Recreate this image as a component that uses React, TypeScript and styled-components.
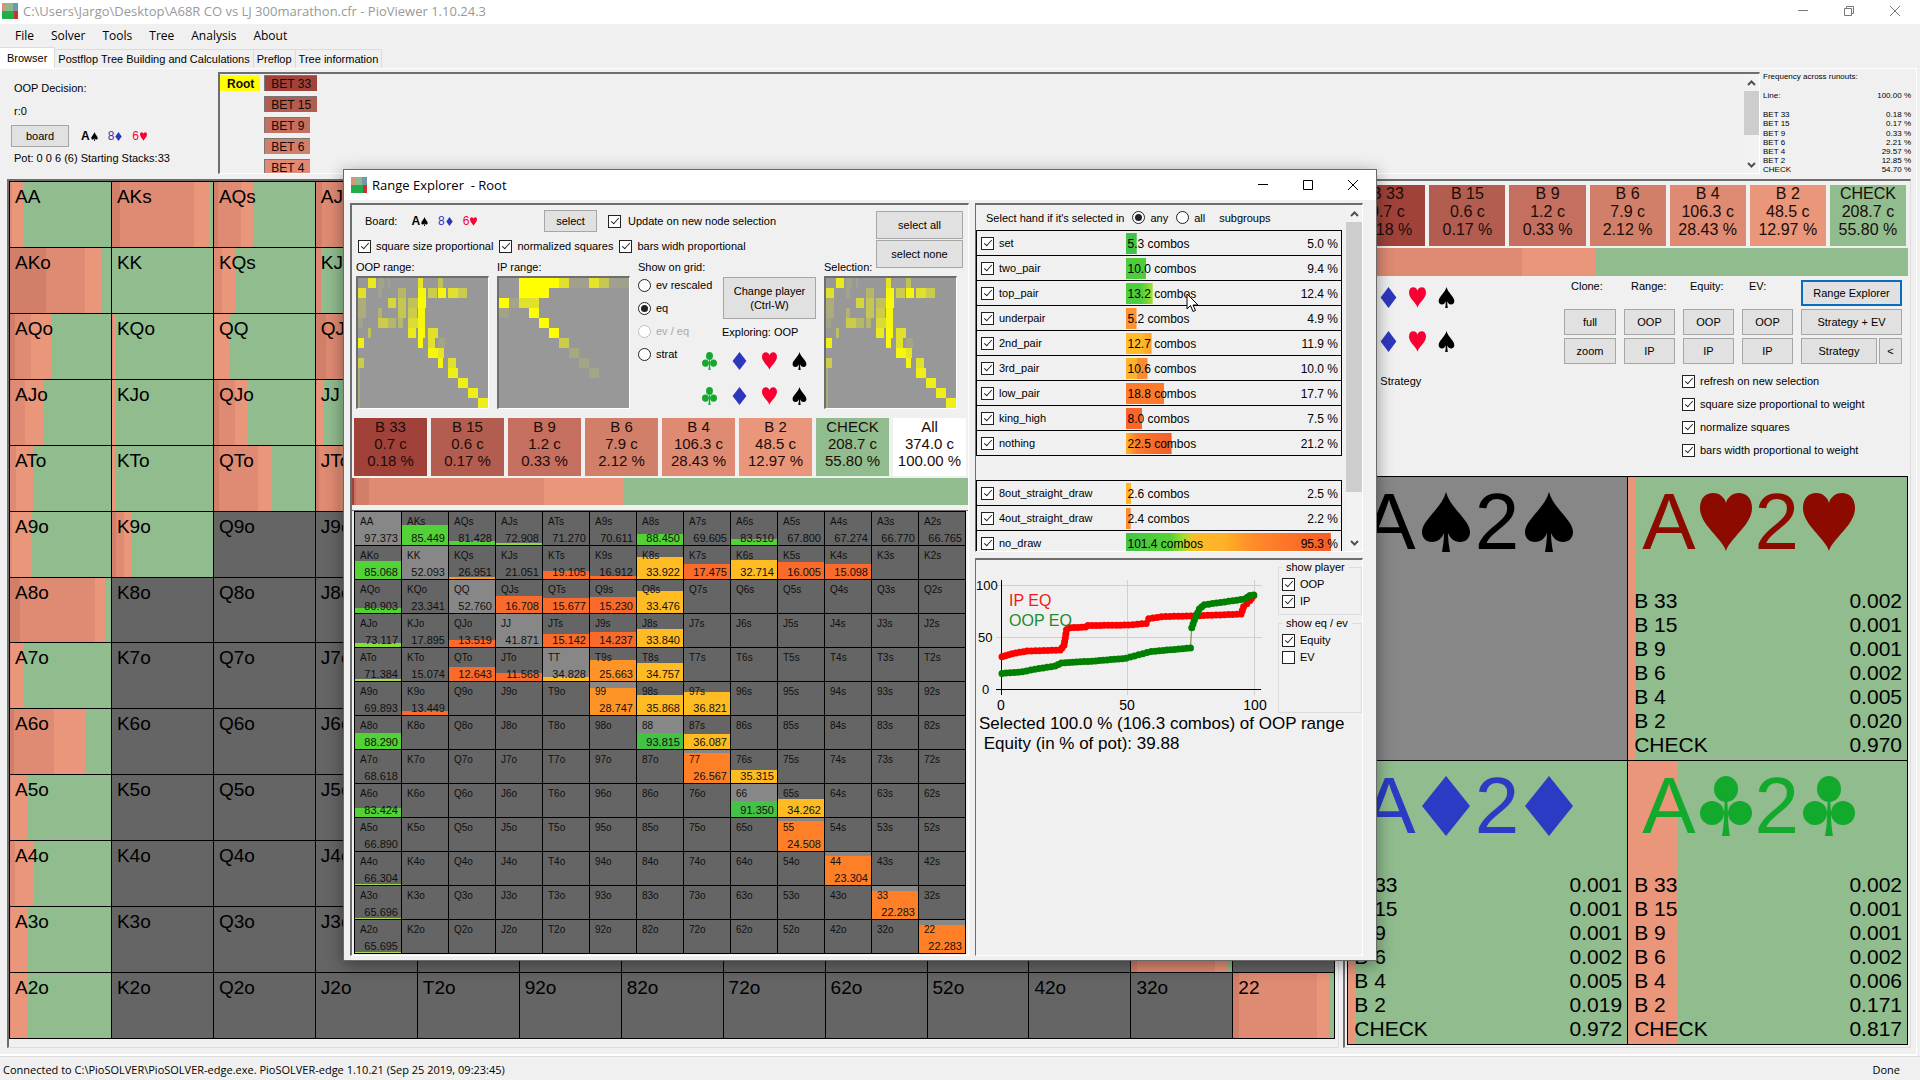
import React from "react";
import styled, { createGlobalStyle, css } from "styled-components";

const UI = `"Liberation Sans", Arial, sans-serif`;
const SHELL = `"Open Sans", "Noto Sans", sans-serif`;

const C = {
  face: "#f0f0f0",
  edge: "#6e6e6e",
  light: "#dcdcdc",
  b33: "#a0423a",
  b15: "#b25d50",
  b9: "#c46f5f",
  b6: "#d27f6a",
  b4: "#df8a72",
  b2: "#e9967a",
  check: "#90bc8e",
  empty: "#656565",
  pair: "#878787",
  red: "#fa0032",
  blue: "#2d37be",
  green: "#12a92c",
};

const GlobalStyle = createGlobalStyle`
  *, *::before, *::after { box-sizing: border-box; }
  body { margin: 0; background: ${C.face}; color: #000; font: 11px/14px ${UI}; }
  button, input { font: inherit; color: inherit; margin: 0; }
  button { padding: 0; }
  table { border-collapse: collapse; border-spacing: 0; }
  td, th { padding: 0; font-weight: normal; text-align: left; }
`;

/* ---------- shared controls ---------- */

const Button = styled.button<{ $h?: number; $focus?: boolean }>`
  height: ${(p) => p.$h ?? 26}px;
  background: #e1e1e1;
  border: ${(p) => (p.$focus ? "2px solid #0a6cbd" : "1px solid #a6a6a6")};
  border-radius: 0;
  text-align: center;
`;

const Label = styled.label<{ $dim?: boolean; $gap?: number }>`
  display: flex;
  align-items: center;
  gap: ${(p) => p.$gap ?? 5}px;
  white-space: nowrap;
  color: ${(p) => (p.$dim ? "#a8a8a8" : "#000")};
`;

const Tick = styled.input.attrs({ type: "checkbox" })`
  appearance: none;
  flex: none;
  display: grid;
  place-items: center;
  width: 13px;
  height: 13px;
  background: #fff;
  border: 1px solid #222;
  &:checked::after {
    content: "";
    width: 4px;
    height: 8px;
    margin-bottom: 2px;
    border: solid #222;
    border-width: 0 1px 1px 0;
    transform: rotate(42deg);
  }
`;

const Dot = styled.input.attrs({ type: "radio" })`
  appearance: none;
  flex: none;
  display: grid;
  place-items: center;
  width: 13px;
  height: 13px;
  background: #fff;
  border: 1px solid #222;
  border-radius: 50%;
  &:checked::after {
    content: "";
    width: 7px;
    height: 7px;
    border-radius: 50%;
    background: #222;
  }
  &:disabled { border-color: #c0c0c0; }
`;

function Check({ text, off, gap }: { text: string; off?: boolean; gap?: number }) {
  return (
    <Label $gap={gap}>
      <Tick defaultChecked={!off} />
      {text}
    </Label>
  );
}

type SuitName = "c" | "d" | "h" | "s";

function Suit({ s, w, h, color }: { s: SuitName; w: number; h: number; color?: string }) {
  const fill = color ?? { c: C.green, d: C.blue, h: C.red, s: "#000" }[s];
  return (
    <svg width={w} height={h} viewBox="0 0 52 60" fill={fill} preserveAspectRatio="none" aria-hidden="true">
      {s === "h" && (
        <path d="M26 59C22 46 0 33 0 16C0 6 6 1 13 1C20 1 25 6 26 11C27 6 32 1 39 1C46 1 52 6 52 16C52 33 30 46 26 59Z" />
      )}
      {s === "d" && <path d="M26 0L50 30L26 60L2 30Z" />}
      {s === "s" && (
        <path d="M26 0C30 16 50 28 50 40C50 46 46 50 40 50C34 50 30 46 28 41C28 48 29 54 30 60H22C23 54 24 48 24 41C22 46 18 50 12 50C6 50 2 46 2 40C2 28 22 16 26 0Z" />
      )}
      {s === "c" && (
        <>
          <ellipse cx="26" cy="13" rx="12" ry="13" />
          <circle cx="12" cy="37" r="12" />
          <circle cx="40" cy="37" r="12" />
          <path d="M25 20H27L28 38C28 48 29 54 30 60H22C23 54 24 48 24 38Z" />
        </>
      )}
    </svg>
  );
}

const Cards = styled.span`
  display: flex;
  align-items: center;
  gap: 10px;
  font-size: 12px;
`;
const Card = styled.b<{ $c: string; $plain?: boolean }>`
  display: flex;
  align-items: center;
  gap: 1px;
  color: ${(p) => p.$c};
  font-weight: ${(p) => (p.$plain ? 400 : 700)};
`;

function Board() {
  return (
    <Cards>
      <Card $c="#000">A<Suit s="s" w={7} h={9} /></Card>
      <Card $c={C.blue} $plain>8<Suit s="d" w={7} h={9} /></Card>
      <Card $c={C.red} $plain>6<Suit s="h" w={7} h={9} /></Card>
    </Cards>
  );
}

function AppIcon() {
  return (
    <svg width="16" height="16" viewBox="0 0 16 16" aria-hidden="true">
      <path fill="#d8937c" d="M0 0h4v9H0z" />
      <path fill="#8fb98a" d="M4 0h7v9H4z" />
      <path fill="#6f98a8" d="M11 0h5v9h-5z" />
      <path fill="#1fae4b" d="M0 8h12v8H0z" />
      <path fill="#c8322f" d="M12 8h4v8h-4z" />
    </svg>
  );
}

const WinButtons = styled.div<{ $gap: number; $c: string }>`
  display: flex;
  align-items: center;
  gap: ${(p) => p.$gap}px;
  margin-left: auto;
  color: ${(p) => p.$c};
`;
const WinButton = styled.button`
  display: grid;
  place-items: center;
  width: 12px;
  height: 12px;
  border: 0;
  background: none;
`;

function WindowControls({ gap, color, restore }: { gap: number; color: string; restore?: boolean }) {
  const g = { width: 12, height: 12, viewBox: "0 0 12 12", fill: "none", stroke: "currentColor" };
  return (
    <WinButtons $gap={gap} $c={color}>
      <WinButton aria-label="Minimize"><svg {...g}><path d="M1 5.5h10" /></svg></WinButton>
      <WinButton aria-label="Maximize">
        <svg {...g}>{restore ? <path d="M1.5 3.5h7v7h-7zM3.5 3V1.5h7v7H9" /> : <path d="M1.500 1.500h9v9h-9z" />}</svg>
      </WinButton>
      <WinButton aria-label="Close"><svg {...g}><path d="M1 1l10 10M11 1L1 11" /></svg></WinButton>
    </WinButtons>
  );
}

const Rail = styled.div<{ $w: number }>`
  flex: none;
  display: flex;
  flex-direction: column;
  align-items: center;
  width: ${(p) => p.$w}px;
  background: #f2f2f2;
  color: #505050;
`;
const RailEnd = styled.span`
  display: grid;
  place-items: center;
  height: 17px;
`;
const Thumb = styled.span<{ $size: number }>`
  align-self: stretch;
  flex: 0 0 ${(p) => p.$size}%;
  margin-bottom: auto;
  background: #cdcdcd;
`;

function Scrollbar({ width, size }: { width: number; size: number }) {
  const g = { width: 9, height: 6, viewBox: "0 0 9 6", fill: "none", stroke: "currentColor", strokeWidth: 2 };
  return (
    <Rail $w={width}>
      <RailEnd><svg {...g}><path d="M1 5l3.500-3.500L8 5" /></svg></RailEnd>
      <Thumb $size={size} />
      <RailEnd><svg {...g}><path d="M1 1l3.500 3.500L8 1" /></svg></RailEnd>
    </Rail>
  );
}

const sunken = css`
  border: solid;
  border-width: 2px 1px 1px 2px;
  border-color: ${C.edge} #fff #fff ${C.edge};
`;

/* ---------- action summary ---------- */

const ACTIONS: [string, string, string, string][] = [
  ["B 33", "0.7 c", "0.18 %", C.b33],
  ["B 15", "0.6 c", "0.17 %", C.b15],
  ["B 9", "1.2 c", "0.33 %", C.b9],
  ["B 6", "7.9 c", "2.12 %", C.b6],
  ["B 4", "106.3 c", "28.43 %", C.b4],
  ["B 2", "48.5 c", "12.97 %", C.b2],
  ["CHECK", "208.7 c", "55.80 %", C.check],
];

const ActionRow = styled.div<{ $big?: boolean }>`
  display: flex;
  gap: 4px;
  padding: 0 2px;
  font-size: ${(p) => (p.$big ? 16 : 15)}px;
  line-height: ${(p) => (p.$big ? 18 : 17)}px;
`;
const Action = styled.button<{ $bg: string; $h: number }>`
  flex: 1 1 0;
  display: flex;
  flex-direction: column;
  align-items: center;
  height: ${(p) => p.$h}px;
  border: 0;
  background: ${(p) => p.$bg};
  color: #1c0c08;
  white-space: nowrap;
`;
const MixBar = styled.div<{ $h: number }>`
  flex: none;
  height: ${(p) => p.$h}px;
  margin-top: 2px;
`;

const steps = (parts: [string, number][]) => {
  let at = 0;
  return `linear-gradient(90deg, ${parts
    .map(([c, end]) => {
      const s = `${c} ${at}% ${end}%`;
      at = end;
      return s;
    })
    .join(", ")})`;
};

const MIX = steps([[C.b33, 0.3], [C.b9, 0.7], [C.b6, 2.8], [C.b4, 31.2], [C.b2, 44.2], [C.check, 100]]);

function Actions({ big, all }: { big?: boolean; all?: boolean }) {
  const list = all ? [...ACTIONS, ["All", "374.0 c", "100.00 %", "#fff"] as [string, string, string, string]] : ACTIONS;
  return (
    <>
      <ActionRow $big={big}>
        {list.map(([n, c, p, bg]) => (
          <Action key={n} $bg={bg} $h={big ? 61 : 58}>
            <span>{n}</span>
            <span>{c}</span>
            <span>{p}</span>
          </Action>
        ))}
      </ActionRow>
      <MixBar $h={big ? 28 : 27} style={{ background: MIX }} />
    </>
  );
}

/* ---------- hand matrices ---------- */

const RANKS = "AKQJT98765432".split("");
const handName = (r: number, c: number) =>
  r === c ? RANKS[r] + RANKS[c] : r < c ? `${RANKS[r]}${RANKS[c]}s` : `${RANKS[c]}${RANKS[r]}o`;
const HANDS = RANKS.flatMap((_, r) => RANKS.map((__, c) => ({ r, c, name: handName(r, c) })));

/* percent of the cell where "bet 6", "bet 4" and "bet 2" end; the rest is check */
const STRATEGY: Record<string, [number, number, number]> = {
  AA: [0, 2, 14], AKs: [8, 81, 97], AQs: [4, 27, 39], AJs: [6, 60, 72], ATs: [0, 20, 40],
  AKo: [36, 74, 91], KK: [0, 0, 0], KQs: [0, 8, 21], KJs: [0, 5, 5],
  AQo: [5, 21, 41], KQo: [0, 1, 4], QQ: [0, 1, 16], QJs: [10, 80, 92],
  AJo: [1, 15, 34], KJo: [0, 0, 3], QJo: [5, 21, 34], JJ: [0, 1, 7],
  ATo: [0, 6, 23], KTo: [0, 0, 3], QTo: [5, 44, 56], JTo: [3, 24, 35],
  A9o: [0, 2, 21], K9o: [4, 12, 19], A8o: [10, 84, 94], A7o: [0, 1, 14], A6o: [4, 44, 75],
  A5o: [0, 1, 18], A4o: [0, 5, 24], A3o: [0, 1, 18], A2o: [0, 1, 18],
  "33": [6, 83, 95], "22": [6, 83, 95],
};

const Matrix = styled.div<{ $size: number }>`
  flex: 1;
  display: grid;
  grid-template-columns: repeat(13, minmax(0, 1fr));
  grid-template-rows: repeat(13, minmax(0, 1fr));
  min-height: 0;
  border: solid #000;
  border-width: 1px 0 0 1px;
  font-size: ${(p) => p.$size}px;
`;
const StrategyCell = styled.div`
  padding: 4px 5px;
  border: solid #000;
  border-width: 0 1px 1px 0;
  line-height: 22px;
`;

function StrategyMatrix() {
  return (
    <Matrix $size={19}>
      {HANDS.map(({ name }) => {
        const m = STRATEGY[name];
        const background = m ? steps([[C.b6, m[0]], [C.b4, m[1]], [C.b2, m[2]], [C.check, 100]]) : C.empty;
        return <StrategyCell key={name} style={{ background }}>{name}</StrategyCell>;
      })}
    </Matrix>
  );
}

const G = "#52d236", Y = "#a9d84c", A = "#ffbb22", O = "#ff9426", P = "#ff7f27", R = "#fa6a2a", D = "#43c345";
/* equity text, filled height as percent of the cell, fill colour */
const EQUITY: Record<string, [string, number, string]> = {
  AA: ["97.373", 0, G], AKs: ["85.449", 60, G], AQs: ["81.428", 12, G], AJs: ["72.908", 6, "#86dc3c"],
  ATs: ["71.270", 0, G], A9s: ["70.611", 0, G], A8s: ["88.450", 33, G], A7s: ["69.605", 0, G],
  A6s: ["83.510", 18, G], A5s: ["67.800", 0, G], A4s: ["67.274", 0, G], A3s: ["66.770", 0, G], A2s: ["66.765", 0, G],
  AKo: ["85.068", 54, G], KK: ["52.093", 0, G], KQs: ["26.951", 6, O], KJs: ["21.051", 0, G], KTs: ["19.105", 24, R],
  K9s: ["16.912", 9, R], K8s: ["33.922", 68, A], K7s: ["17.475", 45, R], K6s: ["32.714", 58, A], K5s: ["16.005", 52, R], K4s: ["15.098", 45, R],
  AQo: ["80.903", 15, G], KQo: ["23.341", 0, G], QQ: ["52.760", 0, G], QJs: ["16.708", 51, R], QTs: ["15.677", 45, R], Q9s: ["15.230", 48, R], Q8s: ["33.476", 68, A],
  AJo: ["73.117", 11, "#86dc3c"], KJo: ["17.895", 0, G], QJo: ["13.519", 21, R], JJ: ["41.871", 0, G], JTs: ["15.142", 38, R], J9s: ["14.237", 45, R], J8s: ["33.840", 54, A],
  ATo: ["71.384", 6, Y], KTo: ["15.074", 0, G], QTo: ["12.643", 42, R], JTo: ["11.568", 24, R], TT: ["34.828", 12, A], T9s: ["25.663", 64, O], T8s: ["34.757", 54, A],
  A9o: ["69.893", 0, G], K9o: ["13.449", 12, R], "99": ["28.747", 82, O], "98s": ["35.868", 60, A], "97s": ["36.821", 71, A],
  A8o: ["88.290", 48, G], "88": ["93.815", 48, D], "87s": ["36.087", 45, A],
  A7o: ["68.618", 0, G], "77": ["26.567", 90, P], "76s": ["35.315", 38, A],
  A6o: ["83.424", 27, G], "66": ["91.350", 49, D], "65s": ["34.262", 56, A],
  A5o: ["66.890", 0, G], "55": ["24.508", 90, P], A4o: ["66.304", 3, Y], "44": ["23.304", 88, P],
  A3o: ["65.696", 3, Y], "33": ["22.283", 86, P], A2o: ["65.695", 3, Y], "22": ["22.283", 86, P],
};

const EquityCell = styled.div`
  display: flex;
  flex-direction: column;
  justify-content: space-between;
  padding: 3px 3px 0 5px;
  border: solid #000;
  border-width: 0 1px 1px 0;
  color: #101010;
  line-height: 13px;
`;
const EquityValue = styled.span`
  align-self: flex-end;
  font-size: 11px;
`;

function EquityMatrix() {
  return (
    <Matrix $size={10}>
      {HANDS.map(({ name, r, c }) => {
        const e = EQUITY[name];
        const base = r === c ? C.pair : C.empty;
        const background = e ? `linear-gradient(0deg, ${e[2]} 0 ${e[1]}%, ${base} ${e[1]}% 100%)` : base;
        return (
          <EquityCell key={name} style={{ background }}>
            <span>{name}</span>
            {e && <EquityValue>{e[0]}</EquityValue>}
          </EquityCell>
        );
      })}
    </Matrix>
  );
}

/* row, column, width share, weight */
type Blot = [number, number, number, number];
const OOP: Blot[] = [
  [0, 1, 0.8, 0.8], [0, 2, 0.6, 0.1], [0, 3, 0.2, 0.1], [0, 6, 0.5, 0.75], [0, 8, 0.5, 0.4],
  [1, 0, 0.8, 0.7], [1, 2, 0.4, 0.1], [1, 4, 0.8, 0.3], [1, 6, 0.8, 0.9], [1, 7, 0.9, 0.5], [1, 8, 0.8, 0.9], [1, 9, 1, 0.7], [1, 10, 0.9, 0.5],
  [2, 0, 0.8, 0.2], [2, 3, 0.8, 0.6], [2, 4, 0.8, 0.45], [2, 5, 1, 0.4], [2, 6, 0.8, 0.95],
  [3, 0, 0.8, 0.2], [3, 2, 0.4, 0.25], [3, 4, 0.8, 0.45], [3, 5, 0.9, 0.5], [3, 6, 0.7, 0.9],
  [4, 0, 0.5, 0.1], [4, 2, 1, 0.5], [4, 3, 0.8, 0.3], [4, 4, 0.5, 0.3], [4, 5, 1, 0.65], [4, 6, 0.7, 0.9],
  [5, 1, 0.3, 0.4], [5, 5, 0.8, 0.8], [5, 6, 0.7, 0.95], [5, 7, 1, 0.7],
  [6, 0, 0.6, 0.85], [6, 6, 0.5, 0.95], [6, 7, 0.7, 0.7], [6, 8, 0.7, 0.12],
  [7, 7, 1, 0.92], [7, 8, 0.6, 0.75], [8, 0, 0.6, 0.5], [8, 8, 0.5, 0.9], [8, 9, 0.8, 0.7],
  [9, 0, 0.2, 0.2], [9, 9, 1, 0.85], [10, 0, 0.2, 0.2], [10, 10, 1, 0.85], [11, 0, 0.2, 0.2], [11, 11, 1, 0.85], [12, 0, 0.2, 0.2], [12, 12, 1, 0.85],
];
const IP: Blot[] = [
  [0, 2, 1, 1], [0, 3, 1, 1], [0, 4, 1, 1], [0, 5, 1, 1], [0, 6, 1, 0.7], [0, 7, 1, 0.08], [0, 8, 1, 0.08], [0, 9, 1, 0.75], [0, 10, 1, 0.45], [0, 11, 1, 0.08], [0, 12, 1, 0.08],
  [1, 2, 1, 1], [1, 3, 1, 1], [1, 4, 1, 1], [2, 0, 1, 1], [2, 1, 1, 0.12], [2, 2, 1, 0.7], [2, 3, 1, 0.7], [3, 0, 1, 0.1], [3, 3, 1, 1],
  [4, 4, 1, 1], [5, 5, 1, 1], [6, 6, 1, 0.5], [7, 7, 1, 0.15], [8, 8, 1, 0.12], [9, 9, 1, 0.12],
];

const MiniBox = styled.div<{ $col: number }>`
  ${sunken}
  grid-area: 4 / ${(p) => p.$col};
  display: grid;
  grid-template: repeat(13, minmax(0, 1fr)) / repeat(13, minmax(0, 1fr));
  width: 133px;
  height: 133px;
  background: #989898;
`;

function MiniRange({ blots, col }: { blots: Blot[]; col: number }) {
  return (
    <MiniBox $col={col}>
      {HANDS.map(({ r, c, name }) => {
        const b = blots.find((x) => x[0] === r && x[1] === c);
        const ink = b ? `rgba(255, 255, 0, ${b[3]})` : "";
        return (
          <span
            key={name}
            style={b && { background: `linear-gradient(90deg, ${ink} ${b[2] * 100}%, transparent ${b[2] * 100}%)` }}
          />
        );
      })}
    </MiniBox>
  );
}

/* ---------- main window ---------- */

const Shell = styled.div`
  position: relative;
  display: flex;
  flex-direction: column;
  min-height: 100vh;
  overflow: hidden;
  background: ${C.face};
`;
const TitleBar = styled.header`
  display: flex;
  align-items: center;
  gap: 5px;
  height: 24px;
  padding: 0 19px 2px 2px;
  background: #fff;
  color: #999;
  font: 13px/18px ${SHELL};
`;
const MenuBar = styled.nav`
  display: flex;
  gap: 17px;
  height: 23px;
  padding-left: 15px;
  font: 12px/18px ${SHELL};
`;
const MenuItem = styled.button`
  border: 0;
  background: none;
`;
const Tabs = styled.div`
  display: flex;
  align-items: flex-end;
  height: 21px;
`;
const Tab = styled.button<{ $on?: boolean }>`
  height: ${(p) => (p.$on ? 21 : 19)}px;
  padding: 0 ${(p) => (p.$on ? 7 : 3)}px;
  border: solid ${C.light};
  border-width: 1px 1px 0 0;
  background: ${(p) => (p.$on ? "#fff" : "#f0f0f0")};
`;
const Page = styled.main`
  flex: 1;
  display: flex;
  flex-direction: column;
  gap: 5px;
  margin-right: 3px;
  padding: 3px 5px 6px 7px;
  border: solid #fff;
  border-width: 1px 1px 2px 0;
`;
const TopStrip = styled.section`
  display: grid;
  grid-template-columns: 208px minmax(0, 1fr) 148px;
  column-gap: 3px;
  height: 102px;
`;
const Info = styled.div`
  display: flex;
  flex-direction: column;
  padding: 8px 0 0 7px;
`;
const InfoLine = styled.div<{ $h?: number }>`
  display: flex;
  align-items: center;
  gap: 12px;
  height: ${(p) => p.$h ?? 22}px;
`;
const BoardButton = styled(Button)`
  width: 58px;
  margin-left: -3px;
`;
const TreeBox = styled.div`
  ${sunken}
  display: flex;
  overflow: hidden;
`;
const TreeBody = styled.div`
  flex: 1;
  display: flex;
  gap: 4px;
  padding-top: 1px;
  font-size: 12px;
`;
const TreeColumn = styled.div`
  display: flex;
  flex-direction: column;
  align-items: flex-start;
  gap: 5px;
`;
const Node = styled.button<{ $bg: string; $root?: boolean }>`
  flex: none;
  height: 16px;
  padding: 0 6px;
  border: solid ${(p) => (p.$root ? p.$bg : "#777")};
  border-width: 1px 0 0 1px;
  background: ${(p) => p.$bg};
  color: #140806;
  font-weight: ${(p) => (p.$root ? 700 : 400)};
  line-height: 14px;
`;
const Runouts = styled.table`
  width: 100%;
  font-size: 8px;
  line-height: 9px;
  td:last-child { text-align: right; }
  td, th { height: 9px; }
`;
const GapRow = styled.tr`
  td { height: 10px; }
`;

const Split = styled.section`
  flex: 1;
  display: grid;
  grid-template-columns: minmax(0, 1333fr) minmax(0, 568fr);
  column-gap: 4px;
`;
const LeftPane = styled.div`
  ${sunken}
  display: flex;
  border-color: ${C.edge} ${C.light} ${C.light} ${C.edge};
  padding: 0 3px 8px 0;
`;
const RightPane = styled.div`
  ${sunken}
  display: flex;
  flex-direction: column;
  border-color: ${C.edge} ${C.light} ${C.light} ${C.edge};
  padding: 4px 2px 2px 2px;
`;
const Controls = styled.div`
  display: flex;
  justify-content: space-between;
  height: 200px;
  padding: 4px 6px 0 4px;
`;
const SuitFilter = styled.div`
  display: grid;
  grid-template-columns: repeat(4, 18px);
  gap: 23px 11px;
  align-content: start;
  padding-top: 7px;
`;
const FilterCaption = styled.span`
  grid-column: 2 / 5;
  line-height: 12px;
`;
const ButtonSide = styled.div`
  display: flex;
  flex-direction: column;
  gap: 8px;
`;
const ButtonGrid = styled.div`
  display: grid;
  grid-template-columns: 52px 51px 51px 51px 101px;
  gap: 3px 8px;
`;
const Caption = styled.span`
  padding-left: 7px;
  line-height: 12px;
`;
const Pair = styled.div`
  display: grid;
  grid-template-columns: 1fr 23px;
  gap: 2px;
`;
const Options = styled.div`
  display: flex;
  flex-direction: column;
  gap: 9px;
  padding: 2px 0 0 118px;
`;
const RunoutGrid = styled.div`
  flex: 1;
  display: grid;
  grid-template: repeat(2, minmax(0, 1fr)) / repeat(2, minmax(0, 1fr));
  border: solid #000;
  border-width: 1px 0 0 1px;
`;
const RunoutCell = styled.div`
  display: flex;
  flex-direction: column;
  justify-content: space-between;
  padding: 9px 5px 3px 6px;
  border: solid #000;
  border-width: 0 1px 1px 0;
`;
const Combo = styled.div<{ $c: string }>`
  display: flex;
  align-items: center;
  padding-left: 8px;
  color: ${(p) => p.$c};
  font-size: 80px;
  line-height: 72px;
`;
const ComboSuit = styled.span`
  display: flex;
  padding: 0 3px 0 4px;
`;
const Stats = styled.table`
  width: 100%;
  font-size: 21px;
  line-height: 24px;
  td { text-align: right; }
`;

const FREQ: [string, string][] = [
  ["BET 33", "0.18 %"], ["BET 15", "0.17 %"], ["BET 9", "0.33 %"], ["BET 6", "2.21 %"],
  ["BET 4", "29.57 %"], ["BET 2", "12.85 %"], ["CHECK", "54.70 %"],
];

const COMBOS: { s: SuitName; color: string; bet: number; v?: string[] }[] = [
  { s: "s", color: "#000", bet: 0 },
  { s: "h", color: "#8c0a00", bet: 2.7, v: ["0.002", "0.001", "0.001", "0.002", "0.005", "0.020", "0.970"] },
  { s: "d", color: "#2b3bc4", bet: 2.7, v: ["0.001", "0.001", "0.001", "0.002", "0.005", "0.019", "0.972"] },
  { s: "c", color: C.green, bet: 18, v: ["0.002", "0.001", "0.001", "0.002", "0.006", "0.171", "0.817"] },
];

const SUITS: SuitName[] = ["c", "d", "h", "s"];

function RunoutCells() {
  return (
    <RunoutGrid>
      {COMBOS.map(({ s, color, bet, v }) => (
        <RunoutCell key={s} style={{ background: v ? steps([[C.b2, bet], [C.check, 100]]) : C.pair }}>
          <Combo $c={color}>
            A<ComboSuit><Suit s={s} w={52} h={60} color={color} /></ComboSuit>
            2<ComboSuit><Suit s={s} w={52} h={60} color={color} /></ComboSuit>
          </Combo>
          {v && (
            <Stats>
              <tbody>
                {v.map((x, i) => (
                  <tr key={i}>
                    <th scope="row">{ACTIONS[i][0]}</th>
                    <td>{x}</td>
                  </tr>
                ))}
              </tbody>
            </Stats>
          )}
        </RunoutCell>
      ))}
    </RunoutGrid>
  );
}

const StatusBar = styled.footer`
  display: flex;
  justify-content: space-between;
  height: 24px;
  padding: 4px 20px 0 3px;
  border-top: 1px solid ${C.light};
  font: 11px/18px ${SHELL};
`;

/* ---------- range explorer ---------- */

const Dialog = styled.section`
  position: absolute;
  left: 343px;
  top: 169px;
  display: flex;
  flex-direction: column;
  width: 1034px;
  height: 792px;
  border: 1px solid #6a6a6a;
  background: ${C.face};
  box-shadow: 0 4px 16px rgba(0, 0, 0, 0.4);
`;
const DialogTitle = styled.header`
  flex: none;
  display: flex;
  align-items: center;
  gap: 5px;
  height: 30px;
  padding: 0 17px 0 7px;
  background: #fff;
  font: 13px/18px ${SHELL};
`;
const DialogBody = styled.div`
  flex: 1;
  display: grid;
  grid-template: minmax(0, 1fr) / minmax(0, 619fr) minmax(0, 388fr);
  column-gap: 6px;
  min-height: 0;
  padding: 3px 13px 4px 6px;
`;
const ExploreLeft = styled.div`
  ${sunken}
  display: flex;
  flex-direction: column;
`;
const Filters = styled.div`
  display: grid;
  grid-template-columns: 133px 133px 76px 94px 1fr;
  grid-template-rows: 28px 22px 19px 133px;
  column-gap: 8px;
  padding: 2px 5px 9px 4px;
`;
const TopRow = styled.div`
  grid-area: 1 / 1 / 2 / 5;
  display: flex;
  align-items: center;
  padding-left: 9px;
`;
const BoardGroup = styled.div`
  display: flex;
  align-items: center;
  gap: 14px;
  width: 179px;
`;
const SelectButton = styled(Button)`
  width: 53px;
  margin-right: 11px;
`;
const TickRow = styled.div`
  grid-area: 2 / 1 / 3 / 5;
  display: flex;
  align-items: center;
  gap: 6px;
  padding-left: 2px;
`;
const SelectSide = styled.div`
  grid-area: 1 / 5 / 4 / 6;
  justify-self: end;
  display: flex;
  flex-direction: column;
  gap: 1px;
  width: 87px;
  padding-top: 4px;
`;
const GridCaption = styled.span<{ $col: number }>`
  grid-area: 3 / ${(p) => p.$col};
  align-self: center;
  white-space: nowrap;
`;
const ShowOn = styled.div`
  grid-area: 4 / 3 / 5 / 5;
  display: flex;
  justify-content: space-between;
`;
const Radios = styled.div`
  display: flex;
  flex-direction: column;
  gap: 9px;
  padding-top: 2px;
`;
const PlayerSide = styled.div`
  flex: none;
  display: flex;
  flex-direction: column;
  align-items: flex-end;
  width: 94px;
`;
const PlayerButton = styled(Button)`
  width: 93px;
  margin-top: 1px;
`;
const Exploring = styled.span`
  width: 94px;
  line-height: 26px;
`;
const SmallSuits = styled.div`
  display: grid;
  grid-template-columns: repeat(4, 16px);
  gap: 17px 14px;
  padding: 7px 8px 0 0;
`;
const EquityFrame = styled.div`
  flex: 1;
  display: flex;
  min-height: 0;
  margin-top: 5px;
  padding: 0 2px 1px 2px;
  border-top: 1px solid ${C.edge};
`;
const ExploreRight = styled.div`
  display: grid;
  grid-template-rows: minmax(0, 349fr) minmax(0, 398fr);
  row-gap: 6px;
`;
const ListBox = styled.div`
  ${sunken}
  display: flex;
  justify-content: space-between;
  overflow: hidden;
  border-left-width: 1px;
`;
const ListMain = styled.div`
  flex: 1;
  margin-right: 4px;
`;
const ListHead = styled.div`
  display: flex;
  align-items: center;
  gap: 8px;
  height: 25px;
  padding-left: 10px;
`;
const Subgroups = styled.span`
  padding-left: 6px;
`;
const HandTable = styled.table`
  width: 100%;
  table-layout: fixed;
  margin-bottom: 24px;
  tr { border: 1px solid #000; height: 25px; }
  td:first-child { width: 149px; padding-left: 4px; }
`;
const BarCell = styled.div`
  display: flex;
  align-items: center;
  justify-content: space-between;
  height: 21px;
  padding: 2px 3px 0 2px;
  background-repeat: no-repeat;
  font-size: 12px;
`;
const Lower = styled.div`
  ${sunken}
  border-left-width: 1px;
`;
const ChartRow = styled.div`
  display: flex;
  justify-content: space-between;
`;
const Groups = styled.div`
  display: flex;
  flex-direction: column;
  gap: 1px;
  width: 84px;
`;
const Group = styled.fieldset<{ $h: number }>`
  display: flex;
  flex-direction: column;
  gap: 3px;
  height: ${(p) => p.$h}px;
  margin: 0;
  padding: 3px 3px 0;
  border: 1px solid ${C.light};
  legend { padding: 0 4px; }
`;
const Summary = styled.p`
  margin: 0;
  padding-left: 3px;
  font-size: 17px;
  line-height: 20px;
  white-space: pre;
`;

const LIST_A: [string, string, number, string][] = [
  ["set", "5.3 combos", 5.0, "#43c345"],
  ["two_pair", "10.0 combos", 9.4, "#4fcd3f"],
  ["top_pair", "13.2 combos", 12.4, "linear-gradient(90deg, #4cce3e 55%, #a5dc2e)"],
  ["underpair", "5.2 combos", 4.9, "#fd9430"],
  ["2nd_pair", "12.7 combos", 11.9, "linear-gradient(90deg, #ffbb28 60%, #ff9f2a)"],
  ["3rd_pair", "10.6 combos", 10.0, "linear-gradient(90deg, #ffb428 50%, #fb8c30 50%)"],
  ["low_pair", "18.8 combos", 17.7, "#fd7a2c"],
  ["king_high", "8.0 combos", 7.5, "#f9652b"],
  ["nothing", "22.5 combos", 21.2, "linear-gradient(90deg, #ffb428, #fb7a2e 25%, #f45c28)"],
];
const LIST_B: [string, string, number, string][] = [
  ["8out_straight_draw", "2.6 combos", 2.5, "#ffb428"],
  ["4out_straight_draw", "2.4 combos", 2.2, "#fb8c30"],
  ["no_draw", "101.4 combos", 95.3, "linear-gradient(90deg, #43c345, #57d234 22%, #a5dc2e 28%, #ffbb28 34%, #ffb028 48%, #ff8c2a 62%, #fb7028 82%, #f45c28)"],
];

function HandList({ rows }: { rows: [string, string, number, string][] }) {
  return (
    <HandTable>
      <tbody>
        {rows.map(([name, combos, pct, fill]) => (
          <tr key={name}>
            <td><Check text={name} /></td>
            <td>
              <BarCell
                style={{
                  backgroundImage: fill.startsWith("#") ? `linear-gradient(${fill}, ${fill})` : fill,
                  backgroundSize: `${pct}% 100%`,
                }}
              >
                <span>{combos}</span>
                <span>{pct.toFixed(1)} %</span>
              </BarCell>
            </td>
          </tr>
        ))}
      </tbody>
    </HandTable>
  );
}

/* equity curves: share of range against equity */
const IP_EQ: [number, number][] = [
  [0, 31], [4, 34], [10, 36.500], [23, 37.500], [24.500, 42], [25, 49], [25.500, 57], [27, 59], [33, 59.500], [34, 61], [50, 61.500],
  [57, 63], [58, 67.500], [63, 69.500], [78, 70.500], [94.500, 72], [95.500, 79], [98, 85], [99.500, 90],
];
const OOP_EQ: [number, number][] = [
  [0, 15], [8, 16.500], [13, 19], [21, 22], [23.500, 25], [37, 27], [49, 29.500], [54, 33], [59, 36], [74.500, 39.500],
];
const OOP_EQ_TOP: [number, number][] = [[75, 59], [76, 66], [78, 77], [80, 81], [96, 86.500], [98, 90], [99.500, 90.500]];
const px = ([x, y]: [number, number]): [number, number] => [26 + x * 2.53, 129 - y * 1.04];

function beads(points: [number, number][]) {
  const out: [number, number][] = [];
  const p = points.map(px);
  for (let i = 1; i < p.length; i++) {
    const [x0, y0] = p[i - 1];
    const [x1, y1] = p[i];
    const n = Math.max(1, Math.round(Math.hypot(x1 - x0, y1 - y0) / 4));
    for (let k = 0; k < n; k++) out.push([x0 + ((x1 - x0) * k) / n, y0 + ((y1 - y0) * k) / n]);
  }
  out.push(p[p.length - 1]);
  return out;
}

function Curve({ points, color }: { points: [number, number][]; color: string }) {
  const b = beads(points);
  return (
    <g fill={color}>
      <polyline points={b.map((q) => q.join(",")).join(" ")} fill="none" stroke={color} strokeWidth="4" />
      {b.map(([x, y], i) => <circle key={i} cx={x} cy={y} r="3.500" />)}
    </g>
  );
}

function EquityChart() {
  return (
    <svg width="296" height="154" viewBox="0 0 296 154" fontFamily={UI} fontSize="14">
      <path stroke="#d0d0d0" fill="none" d="M20 25.500h266M20 77.500h266M151.500 20v115M278.500 20v115" />
      <path stroke="#000" fill="none" d="M20 129.500h265M25.500 20v115" />
      <g fontSize="13">
        <text x="0" y="30">100</text>
        <text x="2" y="82">50</text>
        <text x="6" y="134">0</text>
      </g>
      <g textAnchor="middle">
        <text x="25" y="150">0</text>
        <text x="151" y="150">50</text>
        <text x="279" y="150">100</text>
      </g>
      <g fontSize="16">
        <text x="33" y="46" fill="#ee1c1c">IP EQ</text>
        <text x="33" y="66" fill="#1c8c2c">OOP EQ</text>
      </g>
      <Curve points={IP_EQ} color="#fe0000" />
      <path stroke="#6a8a20" d="M214.500 90L215.500 68" />
      <Curve points={OOP_EQ} color="#008000" />
      <Curve points={OOP_EQ_TOP} color="#008000" />
    </svg>
  );
}

const Pointer = styled.svg`
  position: absolute;
  left: 1186px;
  top: 293px;
`;

function RangeExplorer() {
  return (
    <Dialog aria-label="Range Explorer">
      <DialogTitle>
        <AppIcon />
        <span>Range Explorer&nbsp; - Root</span>
        <WindowControls gap={33} color="#000" />
      </DialogTitle>
      <DialogBody>
        <ExploreLeft>
          <Filters>
            <TopRow>
              <BoardGroup>Board:<Board /></BoardGroup>
              <SelectButton $h={22}>select</SelectButton>
              <Check text="Update on new node selection" gap={7} />
            </TopRow>
            <TickRow>
              <Check text="square size proportional" />
              <Check text="normalized squares" />
              <Check text="bars widh proportional" />
            </TickRow>
            <SelectSide>
              <Button $h={28}>select all</Button>
              <Button $h={28}>select none</Button>
            </SelectSide>
            <GridCaption $col={1}>OOP range:</GridCaption>
            <GridCaption $col={2}>IP range:</GridCaption>
            <GridCaption $col={3}>Show on grid:</GridCaption>
            <GridCaption $col={5}>Selection:</GridCaption>
            <MiniRange blots={OOP} col={1} />
            <MiniRange blots={IP} col={2} />
            <ShowOn>
              <Radios>
                <Label><Dot name="grid" />ev rescaled</Label>
                <Label><Dot name="grid" defaultChecked />eq</Label>
                <Label $dim><Dot name="grid" disabled />ev / eq</Label>
                <Label><Dot name="grid" />strat</Label>
              </Radios>
              <PlayerSide>
                <PlayerButton $h={42}>Change player<br />(Ctrl-W)</PlayerButton>
                <Exploring>Exploring: OOP</Exploring>
                <SmallSuits>
                  {[...SUITS, ...SUITS].map((s, i) => <Suit key={i} s={s} w={15} h={18} />)}
                </SmallSuits>
              </PlayerSide>
            </ShowOn>
            <MiniRange blots={OOP} col={5} />
          </Filters>
          <Actions all />
          <EquityFrame><EquityMatrix /></EquityFrame>
        </ExploreLeft>
        <ExploreRight>
          <ListBox>
            <ListMain>
              <ListHead>
                <span>Select hand if it's selected in</span>
                <Label><Dot name="sub" defaultChecked />any</Label>
                <Label><Dot name="sub" />all</Label>
                <Subgroups>subgroups</Subgroups>
              </ListHead>
              <HandList rows={LIST_A} />
              <HandList rows={LIST_B} />
            </ListMain>
            <Scrollbar width={16} size={78} />
          </ListBox>
          <Lower>
            <ChartRow>
              <EquityChart />
              <Groups>
                <Group $h={55}>
                  <legend>show player</legend>
                  <Check text="OOP" />
                  <Check text="IP" />
                </Group>
                <Group $h={97}>
                  <legend>show eq / ev</legend>
                  <Check text="Equity" />
                  <Check text="EV" off />
                </Group>
              </Groups>
            </ChartRow>
            <Summary>{"Selected 100.0 % (106.3 combos) of OOP range\n Equity (in % of pot): 39.88"}</Summary>
          </Lower>
        </ExploreRight>
      </DialogBody>
    </Dialog>
  );
}

export default function App() {
  return (
    <>
      <GlobalStyle />
      <Shell>
        <TitleBar>
          <AppIcon />
          <span>{"C:\\Users\\Jargo\\Desktop\\A68R CO vs LJ 300marathon.cfr - PioViewer 1.10.24.3"}</span>
          <WindowControls gap={34} color="#777" restore />
        </TitleBar>
        <MenuBar>
          {["File", "Solver", "Tools", "Tree", "Analysis", "About"].map((m) => <MenuItem key={m}>{m}</MenuItem>)}
        </MenuBar>
        <Tabs role="tablist">
          <Tab role="tab" $on>Browser</Tab>
          <Tab role="tab">Postflop Tree Building and Calculations</Tab>
          <Tab role="tab">Preflop</Tab>
          <Tab role="tab">Tree information</Tab>
        </Tabs>
        <Page>
          <TopStrip>
            <Info>
              <InfoLine $h={16}>OOP Decision:</InfoLine>
              <InfoLine $h={29}>r:0</InfoLine>
              <InfoLine>
                <BoardButton $h={22}>board</BoardButton>
                <Board />
              </InfoLine>
              <InfoLine>Pot: 0 0 6 (6) Starting Stacks:33</InfoLine>
            </Info>
            <TreeBox>
              <TreeBody>
                <TreeColumn><Node $bg="#ffff00" $root>Root</Node></TreeColumn>
                <TreeColumn>
                  <Node $bg={C.b33}>BET 33</Node>
                  <Node $bg={C.b15}>BET 15</Node>
                  <Node $bg={C.b9}>BET 9</Node>
                  <Node $bg={C.b6}>BET 6</Node>
                  <Node $bg={C.b4}>BET 4</Node>
                </TreeColumn>
              </TreeBody>
              <Scrollbar width={15} size={44} />
            </TreeBox>
            <Runouts>
              <tbody>
                <tr><td colSpan={2} style={{ textAlign: "left" }}>Frequency across runouts:</td></tr>
                <GapRow><td /></GapRow>
                <tr><td>Line:</td><td>100.00 %</td></tr>
                <GapRow><td /></GapRow>
                {FREQ.map(([a, b]) => <tr key={a}><td>{a}</td><td>{b}</td></tr>)}
              </tbody>
            </Runouts>
          </TopStrip>
          <Split>
            <LeftPane><StrategyMatrix /></LeftPane>
            <RightPane>
              <Actions big />
              <Controls>
                <SuitFilter>
                  {[...SUITS, ...SUITS].map((s, i) => <Suit key={i} s={s} w={17} h={21} />)}
                  <FilterCaption>Strategy</FilterCaption>
                </SuitFilter>
                <ButtonSide>
                  <ButtonGrid>
                    <Caption>Clone:</Caption>
                    <Caption>Range:</Caption>
                    <Caption>Equity:</Caption>
                    <Caption>EV:</Caption>
                    <Button $focus>Range Explorer</Button>
                    <Button>full</Button>
                    <Button>OOP</Button>
                    <Button>OOP</Button>
                    <Button>OOP</Button>
                    <Button>Strategy + EV</Button>
                    <Button>zoom</Button>
                    <Button>IP</Button>
                    <Button>IP</Button>
                    <Button>IP</Button>
                    <Pair>
                      <Button>Strategy</Button>
                      <Button>&lt;</Button>
                    </Pair>
                  </ButtonGrid>
                  <Options>
                    <Check text="refresh on new selection" />
                    <Check text="square size proportional to weight" />
                    <Check text="normalize squares" />
                    <Check text="bars width proportional to weight" />
                  </Options>
                </ButtonSide>
              </Controls>
              <RunoutCells />
            </RightPane>
          </Split>
        </Page>
        <StatusBar>
          <span>{"Connected to C:\\PioSOLVER\\PioSOLVER-edge.exe. PioSOLVER-edge 1.10.21 (Sep 25 2019, 09:23:45)"}</span>
          <span>Done</span>
        </StatusBar>
        <RangeExplorer />
        <Pointer width="13" height="20" viewBox="0 0 13 20" aria-hidden="true">
          <path d="M1 1v15l3.500-3.500L7 18.500l2.500-1L7 12h5z" fill="#fff" stroke="#000" />
        </Pointer>
      </Shell>
    </>
  );
}
